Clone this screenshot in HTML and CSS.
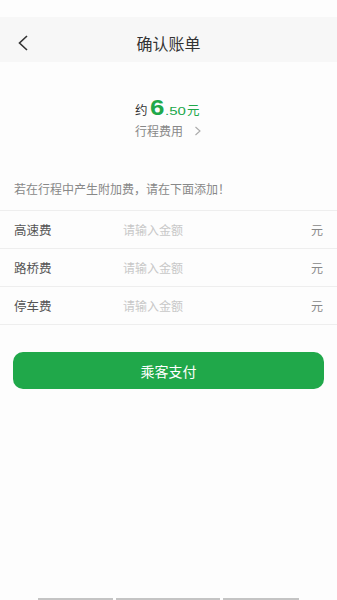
FILE: index.html
```html
<!DOCTYPE html>
<html lang="zh">
<head>
<meta charset="utf-8">
<title>确认账单</title>
<link rel="stylesheet" href="styles.css">
</head>
<body>
<div class="page">
  <div class="status"></div>
  <header class="nav">
    <span class="back">
      <svg width="12" height="16" viewBox="0 0 12 16"><path d="M10 1 L2.5 8 L10 15" fill="none" stroke="#333" stroke-width="1.6"/></svg>
    </span>
    <h1 class="title">确认账单</h1>
  </header>
  <section class="price">
    <div class="price-box">
      <div class="amount"><span class="approx">约</span><span class="big">6</span><span class="small">.50</span><span class="yuan">元</span></div>
      <div class="detail">行程费用
        <svg width="8" height="10" viewBox="0 0 8 10"><path d="M1.5 1 L6 5 L1.5 9" fill="none" stroke="#aaa" stroke-width="1.1"/></svg>
      </div>
    </div>
  </section>
  <p class="hint">若在行程中产生附加费，请在下面添加！</p>
  <div class="list">
    <div class="row"><span class="label">高速费</span><span class="input">请输入金额</span><span class="unit">元</span></div>
    <div class="row"><span class="label">路桥费</span><span class="input">请输入金额</span><span class="unit">元</span></div>
    <div class="row"><span class="label">停车费</span><span class="input">请输入金额</span><span class="unit">元</span></div>
  </div>
  <div class="action"><button class="pay">乘客支付</button></div>
  <div class="spacer"></div>
  <div class="bottom"><span class="seg s1"></span><span class="seg s2"></span><span class="seg s3"></span></div>
</div>
</body>
</html>
```
FILE: styles.css
```css
html, body { margin: 0; padding: 0; }
body {
  background: #fdfdfd;
  font-family: "Noto Sans CJK SC", "Noto Sans", sans-serif;
  color: #333;
}
.page { height: 600px; display: flex; flex-direction: column; }
.status { height: 17px; background: #fdfdfd; }
.nav {
  height: 45px; background: #f7f7f7; position: relative;
  display: flex; align-items: center; justify-content: center;
  box-sizing: border-box; padding-top: 6px;
}
.back { position: absolute; left: 17px; top: 18px; display: flex; }
.title { margin: 0; font-size: 16px; font-weight: 400; color: #333; line-height: 20px; }
.price { display: flex; justify-content: center; margin-top: 34px; }
.price-box { display: flex; flex-direction: column; align-items: flex-start; }
.amount { display: flex; align-items: baseline; height: 24px; line-height: 24px; }
.approx { font-size: 12.5px; color: #333; }
.big {
  display: inline-block; font-family: "Liberation Sans", sans-serif; font-weight: 700;
  font-size: 22.5px; color: #20a84a; margin-left: 2px; margin-right: 3px;
  transform: scaleX(1.15); transform-origin: left;
}
.small {
  display: inline-block; font-family: "Liberation Sans", sans-serif; font-size: 11.5px;
  color: #20a84a; transform: scaleX(1.3); transform-origin: left; margin-right: 6px;
}
.yuan { font-size: 12.5px; color: #20a84a; }
.detail { font-size: 12px; color: #888; display: flex; align-items: center; gap: 11px; margin-top: 4px; line-height: 14px; }
.hint { margin: 43px 0 0; padding: 0 14px; font-size: 12px; color: #888; line-height: 16px; }
.list { margin-top: 13px; border-top: 1px solid #eeeeee; }
.row {
  height: 37px; border-bottom: 1px solid #eeeeee;
  display: flex; align-items: center; padding: 0 14px;
  font-size: 12.5px;
}
.label { width: 109px; color: #555; }
.input { flex: 1; color: #c8c8c8; font-size: 12px; }
.unit { color: #888; font-size: 12px; }
.action { padding: 0 13px; margin-top: 27px; }
.pay {
  width: 100%; height: 37px; border: 0; border-radius: 10px;
  background: #20a84a; color: #fff; font-family: inherit; font-size: 14px;
}
.spacer { flex: 1; }
.bottom { height: 2px; display: flex; padding-left: 38px; gap: 3px; }
.seg { background: #c4c4c4; height: 2px; }
.s1 { width: 75px; }
.s2 { width: 104px; }
.s3 { width: 76px; }
```
